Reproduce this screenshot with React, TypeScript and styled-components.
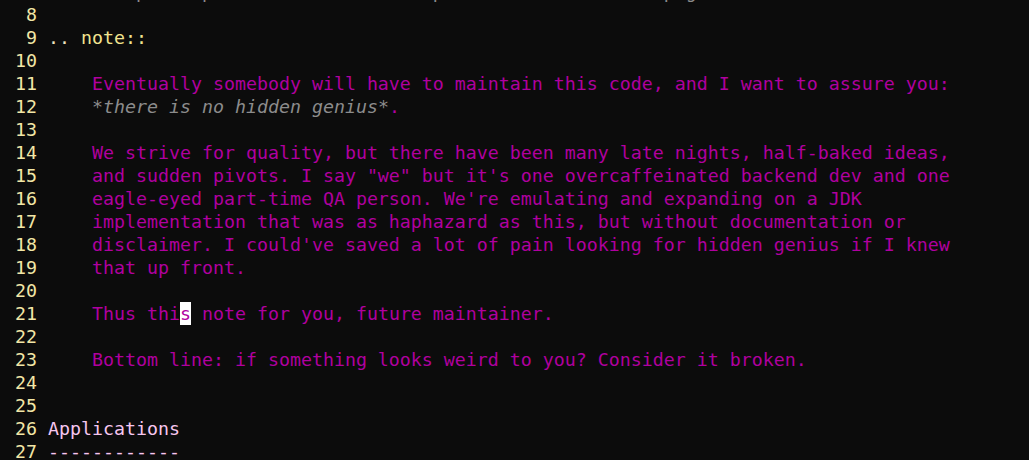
import React from "react";
import styled, { createGlobalStyle } from "styled-components";

const Global = createGlobalStyle`
  html, body { margin: 0; padding: 0; background: #0c0c0c; }
  body { overflow: hidden; }
`;

const Editor = styled.div`
  width: 1029px;
  height: 460px;
  overflow: hidden;
  background: #0c0c0c;
  font-family: "DejaVu Sans Mono", "Liberation Mono", monospace;
  font-size: 18.27px;
  padding-left: 4px;
  box-sizing: border-box;
`;

const Scroll = styled.div`
  display: flex;
  flex-direction: column;
  margin-top: -20.5px;
`;

const Row = styled.div`
  display: flex;
  height: 23px;
  line-height: 23px;
  white-space: pre;
`;

const Gutter = styled.span`
  width: 3ch;
  text-align: right;
  color: #f2e6a6;
  margin-right: 1ch;
  flex: none;
`;

const Text = styled.span<{ $tone?: "plain" | "body" | "heading" | "dim" }>`
  color: ${(p) =>
    p.$tone === "body"
      ? "#b0009f"
      : p.$tone === "heading"
      ? "#f6c6ef"
      : p.$tone === "dim"
      ? "#8c8c8c"
      : "#d8d8d8"};
`;

const Dots = styled.span`
  color: #ece4bf;
`;

const Directive = styled.span`
  color: #f2e48f;
`;

const Emph = styled.span`
  color: #8c8c8c;
  font-style: italic;
`;

const Cursor = styled.span`
  background: #ffffff;
  color: #b0009f;
`;

const Line: React.FC<{ n: number; children?: React.ReactNode }> = ({ n, children }) => (
  <Row>
    <Gutter>{n}</Gutter>
    {children}
  </Row>
);

const body = (s: string) => <Text $tone="body">{s}</Text>;

export default function App() {
  return (
    <>
      <Global />
      <Editor>
        <Scroll>
          <Line n={7}>
            <Text $tone="dim">Much of pile opinions were all set piece made in haste, page.</Text>
          </Line>
          <Line n={8} />
          <Line n={9}>
            <Dots>.. </Dots>
            <Directive>note::</Directive>
          </Line>
          <Line n={10} />
          <Line n={11}>{body("    Eventually somebody will have to maintain this code, and I want to assure you:")}</Line>
          <Line n={12}>
            <Text $tone="body">    </Text>
            <Emph>*there is no hidden genius*</Emph>
            <Text $tone="body">.</Text>
          </Line>
          <Line n={13} />
          <Line n={14}>{body("    We strive for quality, but there have been many late nights, half-baked ideas,")}</Line>
          <Line n={15}>{body('    and sudden pivots. I say "we" but it\'s one overcaffeinated backend dev and one')}</Line>
          <Line n={16}>{body("    eagle-eyed part-time QA person. We're emulating and expanding on a JDK")}</Line>
          <Line n={17}>{body("    implementation that was as haphazard as this, but without documentation or")}</Line>
          <Line n={18}>{body("    disclaimer. I could've saved a lot of pain looking for hidden genius if I knew")}</Line>
          <Line n={19}>{body("    that up front.")}</Line>
          <Line n={20} />
          <Line n={21}>
            <Text $tone="body">    Thus thi</Text>
            <Cursor>s</Cursor>
            <Text $tone="body"> note for you, future maintainer.</Text>
          </Line>
          <Line n={22} />
          <Line n={23}>{body("    Bottom line: if something looks weird to you? Consider it broken.")}</Line>
          <Line n={24} />
          <Line n={25} />
          <Line n={26}>
            <Text $tone="heading">Applications</Text>
          </Line>
          <Line n={27}>
            <Text $tone="heading">------------</Text>
          </Line>
        </Scroll>
      </Editor>
    </>
  );
}
